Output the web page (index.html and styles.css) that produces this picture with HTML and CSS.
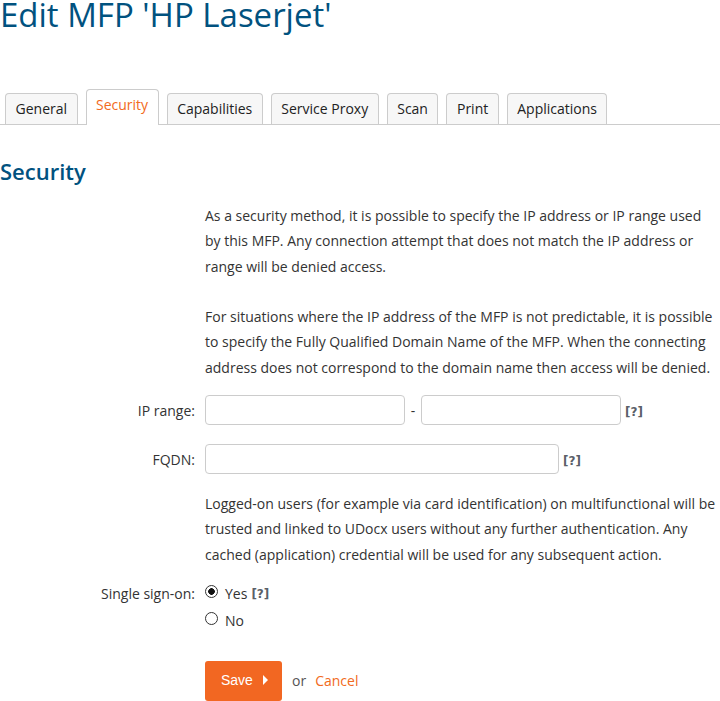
FILE: index.html
```html
<!DOCTYPE html>
<html lang="en">
<head>
    <meta charset="UTF-8">
    <title>Edit MFP</title>
    <link rel="stylesheet" href="styles.css">
</head>
<body>
    <h1>Edit MFP 'HP Laserjet'</h1>
    <nav class="tabs">
        <a href="#" class="tab">General</a>
        <a href="#" class="tab active">Security</a>
        <a href="#" class="tab">Capabilities</a>
        <a href="#" class="tab">Service Proxy</a>
        <a href="#" class="tab">Scan</a>
        <a href="#" class="tab">Print</a>
        <a href="#" class="tab">Applications</a>
    </nav>
    <h2>Security</h2>
    <form class="form">
        <div class="row">
            <div class="label"></div>
            <p class="desc">As a security method, it is possible to specify the IP address or IP range used by this MFP. Any connection attempt that does not match the IP address or range will be denied access.<br><br>For situations where the IP address of the MFP is not predictable, it is possible to specify the Fully Qualified Domain Name of the MFP. When the connecting address does not correspond to the domain name then access will be denied.</p>
        </div>
        <div class="row row-field">
            <label class="label" for="ipFrom">IP range:</label>
            <div class="field">
                <input id="ipFrom" type="text" class="input">
                <span class="dash">-</span>
                <input id="ipTo" type="text" class="input">
                <span class="help">[?]</span>
            </div>
        </div>
        <div class="row row-field">
            <label class="label" for="fqdn">FQDN:</label>
            <div class="field">
                <input id="fqdn" type="text" class="input input-wide">
                <span class="help">[?]</span>
            </div>
        </div>
        <div class="row row-text">
            <div class="label"></div>
            <p class="desc">Logged-on users (for example via card identification) on multifunctional will be trusted and linked to UDocx users without any further authentication. Any cached (application) credential will be used for any subsequent action.</p>
        </div>
        <div class="row row-sso">
            <div class="label">Single sign-on:</div>
            <div class="options">
                <label class="option"><input type="radio" name="sso" class="radio" checked> Yes <span class="help">[?]</span></label>
                <label class="option"><input type="radio" name="sso" class="radio"> No</label>
            </div>
        </div>
        <div class="row row-actions">
            <div class="label"></div>
            <div class="actions">
                <button type="button" class="btn-save">Save <span class="arrow"></span></button>
                <span class="or">or</span>
                <a href="#" class="cancel">Cancel</a>
            </div>
        </div>
    </form>
</body>
</html>
```

FILE: styles.css
```css
body {
    font-family: "Open Sans", Arial, sans-serif;
    font-size: 14px;
    color: #333333;
    margin: 0;
    padding: 0;
    background-color: #ffffff;
}
h1 {
    margin: 0;
    font-size: 33px;
    font-weight: 400;
    line-height: 29px;
    color: #01527f;
}
.tabs {
    display: flex;
    align-items: flex-end;
    gap: 8px;
    margin-top: 60px;
    padding-left: 5px;
    border-bottom: 1px solid #cccccc;
}
.tab {
    display: block;
    padding: 5px 9.5px 5px;
    line-height: 20px;
    font-size: 14px;
    color: #222222;
    text-decoration: none;
    background-color: #f7f7f7;
    border: 1px solid #cccccc;
    border-bottom: none;
    border-radius: 4px 4px 0 0;
}
.tab.active {
    background-color: #ffffff;
    color: #f26a21;
    padding-bottom: 10px;
    margin-bottom: -1px;
}
h2 {
    margin: 31px 0 0;
    font-size: 22px;
    font-weight: 600;
    line-height: 30px;
    color: #01527f;
}
.form {
    margin-top: 17px;
}
.row {
    display: flex;
    gap: 10px;
}
.label {
    flex: 0 0 195px;
    text-align: right;
    color: #333333;
}
.desc {
    margin: 0;
    flex: 1;
    line-height: 25.3px;
    padding-right: 4px;
}
.row-field {
    align-items: center;
    margin-top: 15px;
}
.row-field + .row-field {
    margin-top: 19px;
}
.row-text {
    margin-top: 17px;
}
.field {
    display: flex;
    align-items: center;
}
.input {
    box-sizing: border-box;
    width: 200px;
    height: 30px;
    border: 1px solid #cccccc;
    border-radius: 4px;
    padding: 4px 8px;
    font-family: inherit;
    font-size: 14px;
}
.input-wide {
    width: 354px;
}
.dash {
    width: 16px;
    text-align: center;
    color: #333333;
}
.help {
    margin-left: 4px;
    font-family: "DejaVu Sans", sans-serif;
    font-size: 12px;
    font-weight: 700;
    color: #5a6068;
    position: relative;
    top: 2px;
}
.row-sso {
    margin-top: 13px;
}
.row-sso .label {
    line-height: 27px;
}
.options {
    display: flex;
    flex-direction: column;
}
.option {
    display: flex;
    align-items: center;
    line-height: 27px;
    color: #333333;
}
.radio {
    appearance: none;
    box-sizing: border-box;
    margin: 0 7px 0 0;
    width: 13px;
    height: 13px;
    border: 1px solid #333333;
    border-radius: 50%;
    background-color: #ffffff;
    position: relative;
    top: -2px;
}
.radio:checked {
    background: radial-gradient(circle, #111111 0, #111111 3px, #ffffff 3.6px);
}
.option .help {
    top: 1px;
}
.row-actions {
    margin-top: 27px;
}
.actions {
    display: flex;
    align-items: center;
}
.btn-save {
    display: flex;
    align-items: center;
    height: 40px;
    width: 77px;
    padding: 0 0 2px 16px;
    border: none;
    border-radius: 3px;
    background-color: #f26722;
    color: #ffffff;
    font-family: "Liberation Sans", Arial, sans-serif;
    font-size: 14px;
    cursor: pointer;
}
.arrow {
    display: inline-block;
    margin-left: 10px;
    width: 0;
    height: 0;
    border-top: 5px solid transparent;
    border-bottom: 5px solid transparent;
    border-left: 5px solid #ffffff;
}
.or {
    margin-left: 10px;
    color: #555555;
}
.cancel {
    margin-left: 9px;
    color: #f26a21;
    text-decoration: none;
}
```
